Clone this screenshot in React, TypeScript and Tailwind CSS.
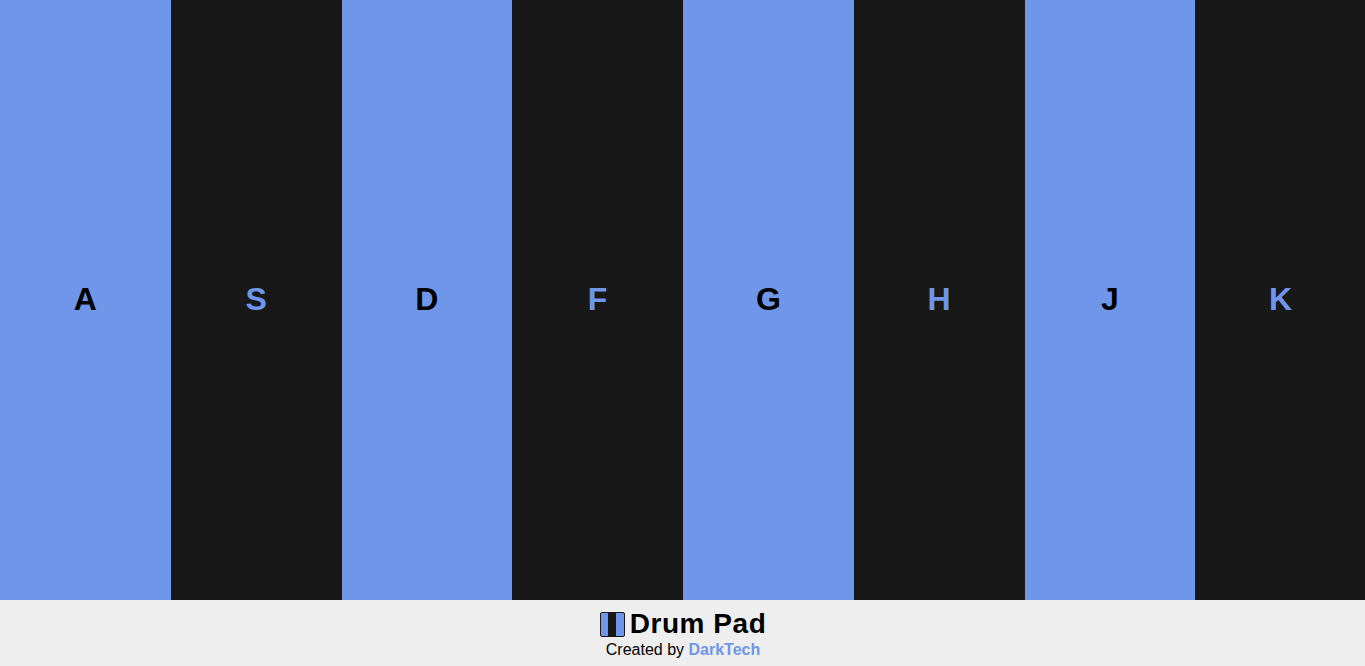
const keys = ["A", "S", "D", "F", "G", "H", "J", "K"];

export default function App() {
  return (
    <div className="h-[666px] overflow-hidden bg-[#eeeeee] font-['Liberation_Sans',Arial,sans-serif]">
      <div className="flex w-[1366px] flex-col">
        <div className="grid h-[600px] grid-cols-8">
          {keys.map((k, i) => (
            <button
              key={k}
              className={
                i % 2 === 0
                  ? "flex items-center justify-center pb-[2px] bg-[#6f96e9] text-[32px] font-bold text-black"
                  : "flex items-center justify-center pb-[2px] bg-[#181818] text-[32px] font-bold text-[#6f96e9]"
              }
            >
              {k}
            </button>
          ))}
        </div>
        <div className="flex h-[66px] flex-col items-center pt-[9px]">
          <div className="flex h-[31px] items-start gap-[5px] text-[28px] leading-[30px] font-bold tracking-[0.55px] text-black">
            <svg width="25" height="25" viewBox="0 0 25 25" className="mt-[3px]">
              <rect x="0.5" y="0.5" width="24" height="24" rx="1.5" fill="#6f96e9" stroke="#181818" />
              <rect x="8" y="1" width="8" height="23" fill="#181818" />
            </svg>
            <span>Drum Pad</span>
          </div>
          <div className="text-base leading-[20px] text-black">
            Created by <span className="font-bold text-[#6f96e9]">DarkTech</span>
          </div>
        </div>
      </div>
    </div>
  );
}
